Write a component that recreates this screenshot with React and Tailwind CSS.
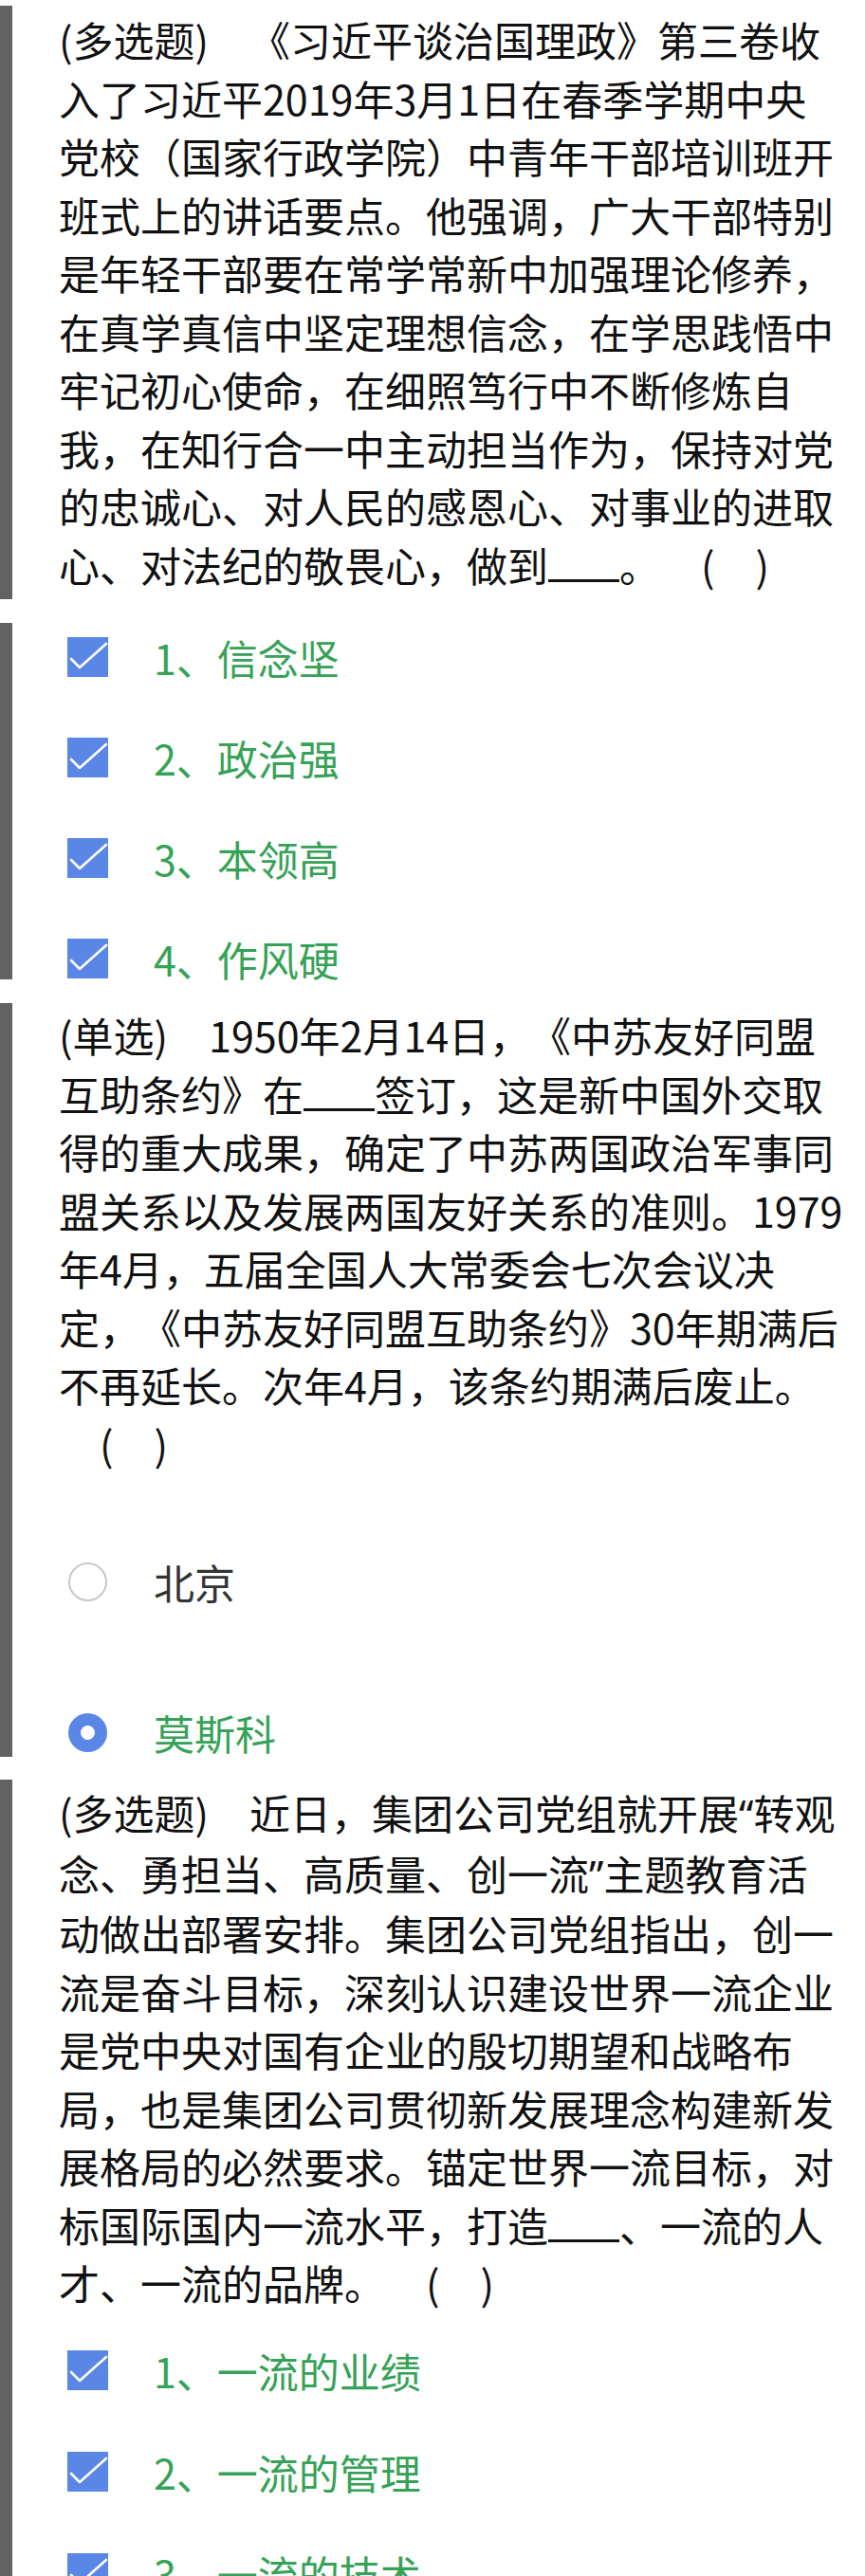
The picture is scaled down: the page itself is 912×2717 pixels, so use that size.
const q1Lines = [
  "(多选题)\u3000《习近平谈治国理政》第三卷收",
  "入了习近平2019年3月1日在春季学期中央",
  "党校（国家行政学院）中青年干部培训班开",
  "班式上的讲话要点。他强调，广大干部特别",
  "是年轻干部要在常学常新中加强理论修养，",
  "在真学真信中坚定理想信念，在学思践悟中",
  "牢记初心使命，在细照笃行中不断修炼自",
  "我，在知行合一中主动担当作为，保持对党",
  "的忠诚心、对人民的感恩心、对事业的进取",
  "心、对法纪的敬畏心，做到{_}。\u3000(\u3000)",
];

const q2Lines = [
  "(单选)\u30001950年2月14日，《中苏友好同盟",
  "互助条约》在{_}签订，这是新中国外交取",
  "得的重大成果，确定了中苏两国政治军事同",
  "盟关系以及发展两国友好关系的准则。1979",
  "年4月，五届全国人大常委会七次会议决",
  "定，《中苏友好同盟互助条约》30年期满后",
  "不再延长。次年4月，该条约期满后废止。",
  "\u3000(\u3000)",
];

const q3Lines = [
  "(多选题)\u3000近日，集团公司党组就开展“转观",
  "念、勇担当、高质量、创一流”主题教育活",
  "动做出部署安排。集团公司党组指出，创一",
  "流是奋斗目标，深刻认识建设世界一流企业",
  "是党中央对国有企业的殷切期望和战略布",
  "局，也是集团公司贯彻新发展理念构建新发",
  "展格局的必然要求。锚定世界一流目标，对",
  "标国际国内一流水平，打造{_}、一流的人",
  "才、一流的品牌。\u3000(\u3000)",
];

function Line({ text }) {
  const parts = text.split(/(\{_\}|“|”)/).filter((p) => p !== "");
  return (
    <div className="whitespace-pre">
      {parts.map((p, i) => {
        if (p === "{_}")
          return (
            <span
              key={i}
              className="inline-block w-[75px] border-b-[3px] border-[#111]"
            ></span>
          );
        if (p === "“" || p === "”")
          return (
            <span key={i} className="font-['Noto_Sans',sans-serif]">
              {p}
            </span>
          );
        return <span key={i}>{p}</span>;
      })}
    </div>
  );
}

function Question({ lines }) {
  return (
    <div>
      {lines.map((l, i) => (
        <Line key={i} text={l} />
      ))}
    </div>
  );
}

function CheckBox() {
  return (
    <svg width="43" height="42" viewBox="0 0 43 42" className="shrink-0">
      <rect width="43" height="42" fill="#5a87e6" />
      <polyline
        points="4,23 13,32 41,7"
        fill="none"
        stroke="#fff"
        strokeWidth="2.6"
        strokeLinejoin="round"
        strokeLinecap="round"
      />
    </svg>
  );
}

function CheckOption({ label }) {
  return (
    <div className="flex h-[42px] items-center gap-[48px]">
      <CheckBox />
      <span className="leading-[42px] text-[#36a257]">{label}</span>
    </div>
  );
}

function RadioOption({ label, checked }) {
  return (
    <div className="flex h-[42px] items-center gap-[49px]">
      {checked ? (
        <span className="h-[41px] w-[41px] shrink-0 rounded-full border-[13px] border-[#5a87e6] bg-white"></span>
      ) : (
        <span className="h-[41px] w-[41px] shrink-0 rounded-full border-2 border-[#c8c8c8] bg-white"></span>
      )}
      <span
        className={`leading-[42px] ${
          checked ? "text-[#36a257]" : "text-[#333]"
        }`}
      >
        {label}
      </span>
    </div>
  );
}

export default function App() {
  return (
    <div className="min-h-screen overflow-hidden bg-white pt-[6px] font-['Noto_Sans_CJK_SC','Noto_Sans',sans-serif] text-[43px] leading-[61.5px] text-[#111] [text-spacing-trim:space-all]">
      {/* question 1 */}
      <section className="border-l-[13px] border-[#626262] pl-[49px] pt-[5px] pb-[6px]">
        <Question lines={q1Lines} />
      </section>

      <section className="mt-[25px] flex flex-col gap-[64px] border-l-[13px] border-[#626262] pl-[58px] pt-[15px] pb-[1px]">
        <CheckOption label="1、信念坚" />
        <CheckOption label="2、政治强" />
        <CheckOption label="3、本领高" />
        <CheckOption label="4、作风硬" />
      </section>

      {/* question 2 */}
      <section className="mt-[25px] border-l-[13px] border-[#626262] pl-[49px] pt-[3px] pb-[5px]">
        <Question lines={q2Lines} />
        <div className="pl-[10px]">
          <div className="mt-[94px]">
            <RadioOption label="北京" />
          </div>
          <div className="mt-[117px]">
            <RadioOption label="莫斯科" checked />
          </div>
        </div>
      </section>

      {/* question 3 */}
      <section className="mt-[24px] border-l-[13px] border-[#626262] pl-[49px] pt-[4px] pb-[40px]">
        <Question lines={q3Lines} />
        <div className="ml-[9px] mt-[40px] flex flex-col gap-[65px]">
          <CheckOption label="1、一流的业绩" />
          <CheckOption label="2、一流的管理" />
          <CheckOption label="3、一流的技术" />
        </div>
      </section>
    </div>
  );
}
